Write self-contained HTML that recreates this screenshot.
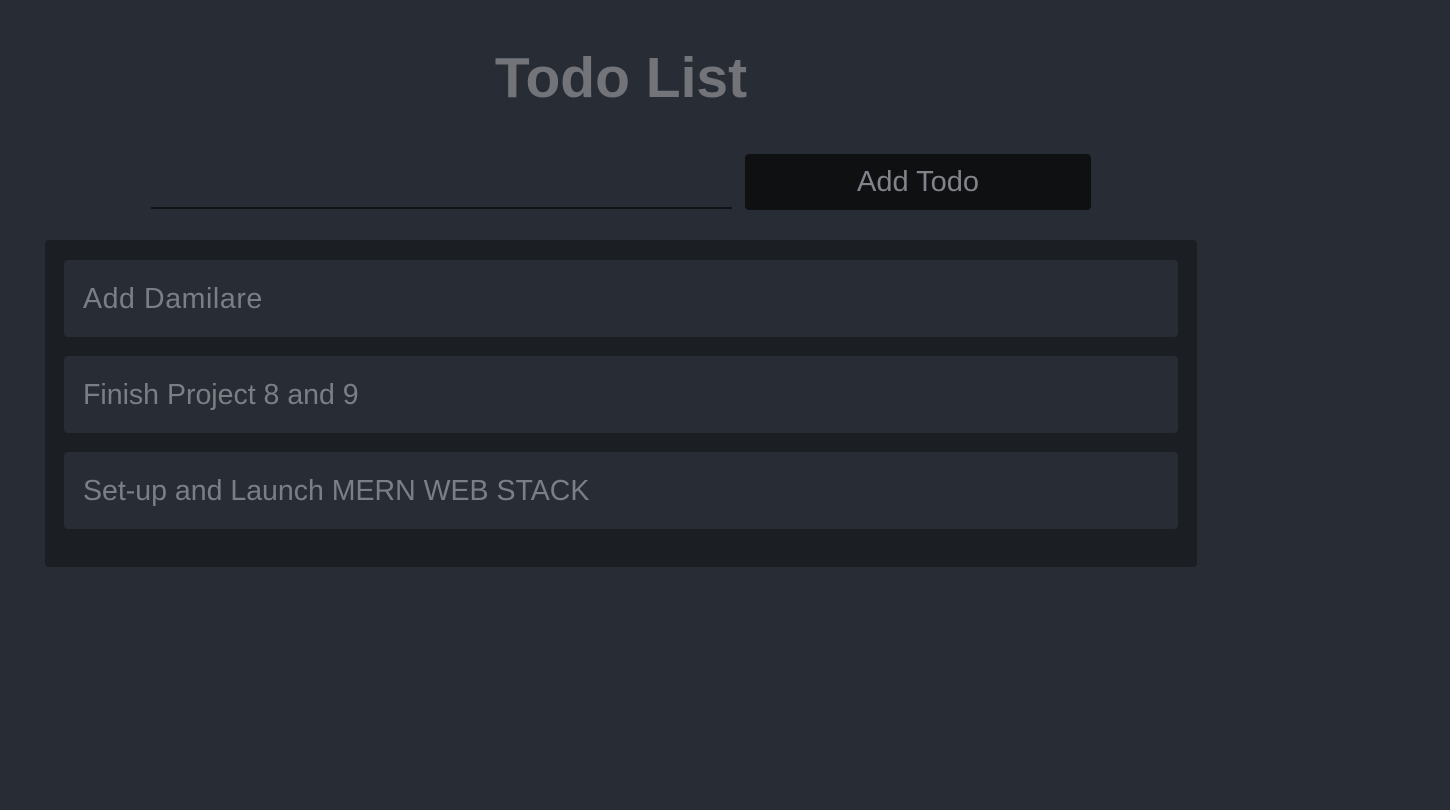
<!DOCTYPE html>
<html><head><style>
body{margin:0;background:#282c34;width:1450px;height:810px;overflow:hidden;font-family:"Liberation Sans",sans-serif;color:#7b7e85;position:relative}
h1{position:absolute;top:45px;left:0;width:1242px;text-align:center;margin:0;font-size:57px;font-weight:bold;color:#727479}
.line{position:absolute;left:151px;top:207px;width:581px;height:2px;background:#111214}
.btn{position:absolute;left:745px;top:154px;width:346px;height:56px;background:#0f1012;border-radius:4px;text-align:center;line-height:56px;font-size:29px;color:#80838a}
.panel{position:absolute;left:45px;top:240px;width:1152px;height:327px;background:#1b1e23;border-radius:4px}
.item{position:absolute;left:19px;width:1114px;height:77px;background:#282c34;border-radius:4px;font-size:28.5px;line-height:79px;padding-left:19px;box-sizing:border-box}
</style></head><body>
<h1>Todo List</h1>
<div class="line"></div>
<div class="btn">Add Todo</div>
<div class="panel">
<div class="item" style="top:20px;letter-spacing:0.6px">Add Damilare</div>
<div class="item" style="top:116px">Finish Project 8 and 9</div>
<div class="item" style="top:212px">Set-up and Launch MERN WEB STACK</div>
</div>
</body></html>
